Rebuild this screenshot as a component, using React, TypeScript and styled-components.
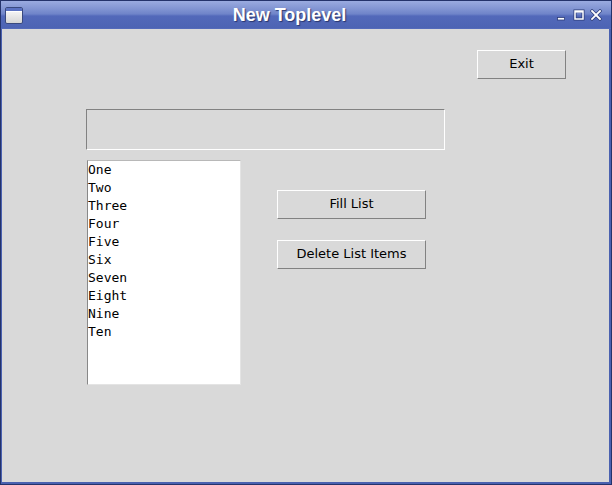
import React from "react";
import styled, { createGlobalStyle } from "styled-components";

const Global = createGlobalStyle`
  html, body { margin: 0; padding: 0; background: #d9d9d9; }
  body { width: 612px; height: 485px; overflow: hidden; }
`;

const Frame = styled.div`
  box-sizing: border-box;
  width: 612px;
  height: 485px;
  display: flex;
  flex-direction: column;
  background: #4a61b0;
  border: 1px solid #24336b;
  padding: 0 2px 2px 1px;
`;

const TitleBar = styled.div`
  height: 28px;
  flex: none;
  display: flex;
  align-items: center;
  background: linear-gradient(
    to bottom,
    #9aabe0 0px,
    #8194d2 8px,
    #6f84c9 13px,
    #5369ba 15px,
    #4d64b4 27px,
    #5b71c0 28px
  );
  margin: 0 -2px 0 -1px;
  padding: 0 9px 0 4px;
`;

const AppIcon = styled.svg`
  width: 18px;
  height: 17px;
  flex: none;
  margin-top: 1px;
`;

const Title = styled.div`
  flex: 1;
  text-align: center;
  font-family: "Liberation Sans", Arial, sans-serif;
  font-weight: bold;
  font-size: 18px;
  color: #ffffff;
  text-shadow: 1px 1px 1px rgba(30, 40, 90, 0.8);
  padding-left: 0px;
`;

const Controls = styled.div`
  display: flex;
  align-items: center;
  gap: 5px;
  flex: none;
`;

const CtlIcon = styled.svg`
  width: 12px;
  height: 12px;
  display: block;
`;

const Content = styled.div`
  flex: 1;
  background: #d9d9d9;
  display: flex;
  flex-direction: column;
  padding-top: 21px;
`;

const TopRow = styled.div`
  display: flex;
  justify-content: flex-end;
  padding-right: 43px;
`;

const Button = styled.div<{ $w: number }>`
  box-sizing: border-box;
  width: ${(p) => p.$w}px;
  height: 29px;
  display: flex;
  align-items: center;
  justify-content: center;
  font-family: "DejaVu Sans", sans-serif;
  font-size: 13px;
  color: #000;
  background: #d9d9d9;
  border-top: 1px solid #ffffff;
  border-left: 1px solid #ffffff;
  border-right: 1px solid #828282;
  border-bottom: 1px solid #828282;
  padding-bottom: 2px;
`;

const Entry = styled.div`
  box-sizing: border-box;
  margin: 30px 0 0 84px;
  width: 359px;
  height: 41px;
  background: #d9d9d9;
  border-top: 1px solid #828282;
  border-left: 1px solid #828282;
  border-right: 1px solid #ffffff;
  border-bottom: 1px solid #ffffff;
`;

const MainRow = styled.div`
  display: flex;
  margin-top: 10px;
  padding-left: 85px;
`;

const ListBox = styled.div`
  box-sizing: border-box;
  width: 154px;
  height: 225px;
  background: #ffffff;
  border-top: 1px solid #b8b8b8;
  border-left: 1px solid #888888;
  border-right: 1px solid #e4e4e4;
  border-bottom: 1px solid #e4e4e4;
`;

const ListItem = styled.div`
  font-family: "DejaVu Sans Mono", monospace;
  font-size: 13px;
  line-height: 18px;
  color: #000;
  white-space: pre;
`;

const ButtonColumn = styled.div`
  display: flex;
  flex-direction: column;
  gap: 21px;
  margin-left: 36px;
  padding-top: 30px;
`;

const items = ["One", "Two", "Three", "Four", "Five", "Six", "Seven", "Eight", "Nine", "Ten"];

export default function App() {
  return (
    <>
      <Global />
      <Frame>
        <TitleBar>
          <AppIcon viewBox="0 0 18 17">
            <defs>
              <linearGradient id="ib" x1="0" y1="0" x2="0" y2="1">
                <stop offset="0" stopColor="#ffffff" />
                <stop offset="1" stopColor="#d4d4d4" />
              </linearGradient>
            </defs>
            <rect x="0.5" y="0.5" width="17" height="16" rx="1.5" fill="url(#ib)" stroke="#39497f" />
            <rect x="1" y="1" width="16" height="3" fill="#5b72c2" />
            <line x1="1" y1="4.5" x2="17" y2="4.5" stroke="#ffffff" />
          </AppIcon>
          <Title>New Toplevel</Title>
          <Controls>
            <CtlIcon viewBox="0 0 12 12">
              <rect x="1.5" y="8.5" width="7" height="2.5" fill="#ffffff" stroke="#2d3d78" strokeWidth="0.8" />
            </CtlIcon>
            <CtlIcon viewBox="0 0 12 12">
              <rect x="2" y="2" width="8" height="8" fill="none" stroke="#2d3d78" strokeWidth="3" />
              <rect x="2" y="2" width="8" height="8" fill="none" stroke="#ffffff" strokeWidth="1.5" />
              <rect x="2" y="2" width="8" height="1.6" fill="#ffffff" />
            </CtlIcon>
            <CtlIcon viewBox="0 0 12 12">
              <path d="M2 2 L10 10 M10 2 L2 10" stroke="#2d3d78" strokeWidth="3.2" strokeLinecap="square" />
              <path d="M2 2 L10 10 M10 2 L2 10" stroke="#ffffff" strokeWidth="1.8" strokeLinecap="square" />
            </CtlIcon>
          </Controls>
        </TitleBar>
        <Content>
          <TopRow>
            <Button $w={89}>Exit</Button>
          </TopRow>
          <Entry />
          <MainRow>
            <ListBox>
              {items.map((t) => (
                <ListItem key={t}>{t}</ListItem>
              ))}
            </ListBox>
            <ButtonColumn>
              <Button $w={149}>Fill List</Button>
              <Button $w={149}>Delete List Items</Button>
            </ButtonColumn>
          </MainRow>
        </Content>
      </Frame>
    </>
  );
}
